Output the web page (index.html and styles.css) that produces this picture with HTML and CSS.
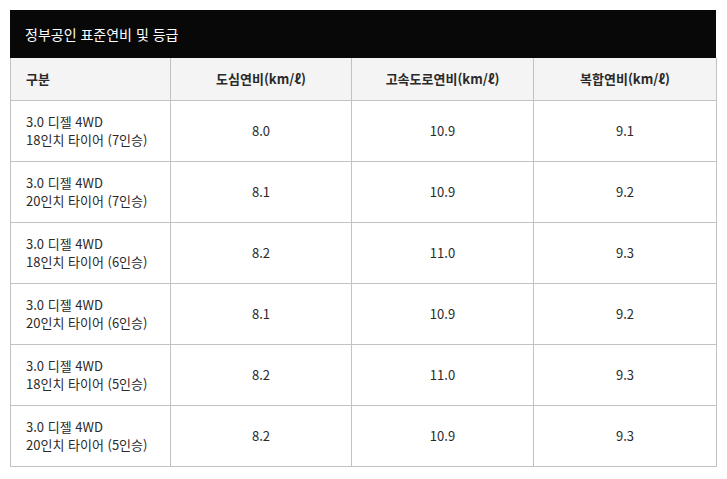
FILE: index.html
```html
<!DOCTYPE html>
<html lang="ko">
<head>
<meta charset="utf-8">
<link rel="stylesheet" href="styles.css">
</head>
<body>
<div class="wrap">
  <div class="title">정부공인 표준연비 및 등급</div>
  <table class="spec">
    <colgroup>
      <col class="c1"><col class="c2"><col class="c3"><col class="c4">
    </colgroup>
    <thead>
      <tr><th class="left">구분</th><th>도심연비(km/ℓ)</th><th>고속도로연비(km/ℓ)</th><th>복합연비(km/ℓ)</th></tr>
    </thead>
    <tbody>
      <tr><td class="left">3.0 디젤 4WD<br>18인치 타이어 (7인승)</td><td>8.0</td><td>10.9</td><td>9.1</td></tr>
      <tr><td class="left">3.0 디젤 4WD<br>20인치 타이어 (7인승)</td><td>8.1</td><td>10.9</td><td>9.2</td></tr>
      <tr><td class="left">3.0 디젤 4WD<br>18인치 타이어 (6인승)</td><td>8.2</td><td>11.0</td><td>9.3</td></tr>
      <tr><td class="left">3.0 디젤 4WD<br>20인치 타이어 (6인승)</td><td>8.1</td><td>10.9</td><td>9.2</td></tr>
      <tr><td class="left">3.0 디젤 4WD<br>18인치 타이어 (5인승)</td><td>8.2</td><td>11.0</td><td>9.3</td></tr>
      <tr><td class="left">3.0 디젤 4WD<br>20인치 타이어 (5인승)</td><td>8.2</td><td>10.9</td><td>9.3</td></tr>
    </tbody>
  </table>
</div>
</body>
</html>
```
FILE: styles.css
```css
html, body { margin: 0; padding: 0; background: #fff; }
body {
  font-family: "Noto Sans CJK KR", "Noto Sans", sans-serif;
  color: #2a2a2a;
}
.wrap { padding: 10px 0 0 10px; width: 706px; }
.title {
  background: #080808;
  color: #fff;
  height: 48px;
  display: flex;
  align-items: center;
  padding-left: 15px;
  font-size: 14px;
}
.spec {
  border-collapse: collapse;
  width: 706px;
  table-layout: fixed;
  font-size: 13px;
}
.c1 { width: 160px; }
.c2 { width: 181px; }
.c3 { width: 182px; }
.c4 { width: 183px; }
.spec th, .spec td {
  border: 1px solid #c2c2c2;
  text-align: center;
  padding: 0;
  line-height: 18px;
}
.spec th {
  background: #f4f4f4;
  height: 42px;
  font-weight: bold;
  border-top: none;
}
.spec td { height: 60px; }
.spec .left { text-align: left; padding-left: 15px; }
```
